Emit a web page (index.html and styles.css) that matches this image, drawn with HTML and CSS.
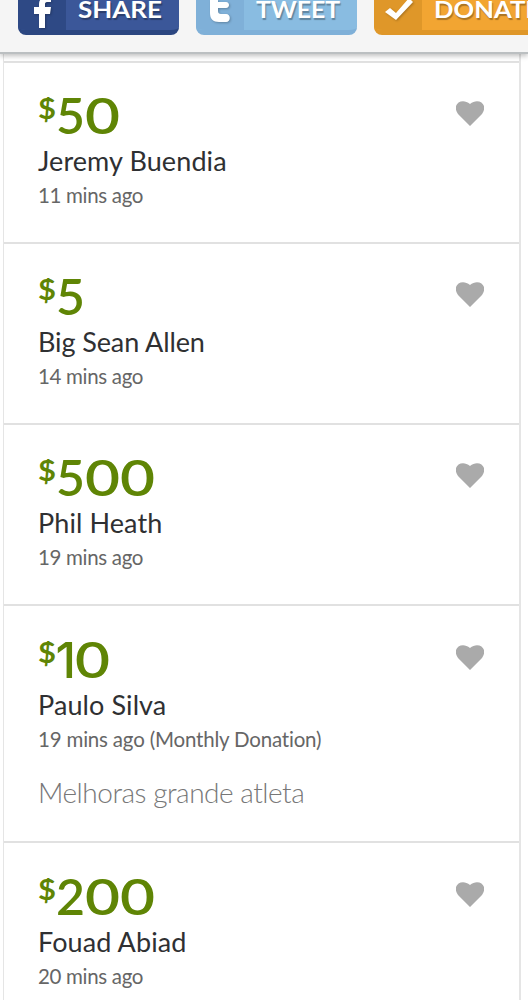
FILE: index.html
```html
<!DOCTYPE html>
<html lang="en">
<head>
<meta charset="utf-8">
<title>Donations</title>
<link rel="stylesheet" href="styles.css">
</head>
<body>
<header class="actions">
  <a class="btn facebook"><span class="btn-icon"><svg width="42" height="28" viewBox="0 0 42 28"><path d="M21 28V14h-5V7h5V4c0-4 2-6 6-6h6v4h-4c-1.500 0-2 1-2 2v3h6l-1 7h-5v14z"/></svg></span><svg class="btn-label" width="113" height="30"><text x="12" y="18" textLength="84" lengthAdjust="spacingAndGlyphs">SHARE</text></svg></a>
  <a class="btn twitter"><span class="btn-icon"><svg width="42" height="28" viewBox="0 0 42 28"><path d="M14-2h8v4h8c4 0 4 6 0 6h-8v3c0 2 1 3 3 3h5c5 0 5 8 0 8h-7c-6 0-9-3-9-9z"/></svg></span><svg class="btn-label" width="113" height="30"><text x="12" y="18" textLength="84" lengthAdjust="spacingAndGlyphs">TWEET</text></svg></a>
  <a class="btn donate"><span class="btn-icon"><svg width="42" height="28" viewBox="0 0 42 28"><path d="M11 12l5-4 6 5L35-2l4 4-17 18z"/></svg></span><svg class="btn-label" width="140" height="30"><text x="12" y="18" textLength="106" lengthAdjust="spacingAndGlyphs">DONATE</text></svg></a>
</header>
<main class="donations">
  <article class="donation">
    <div class="details">
      <svg class="amount" width="130" height="40"><text class="currency" x="0" y="22" textLength="18" lengthAdjust="spacingAndGlyphs">$</text><text x="18" y="37" textLength="29" lengthAdjust="spacingAndGlyphs">5</text><text x="47" y="37" textLength="35" lengthAdjust="spacingAndGlyphs">0</text></svg>
      <h2 class="name">Jeremy Buendia</h2>
      <p class="time">11 mins ago</p>
    </div>
    <svg class="heart" width="28" height="25" viewBox="0 0 28 25"><path d="M14 25L2 13C-5 3 6-4 14 3c8-7 19 0 12 10z"/></svg>
  </article>
  <article class="donation">
    <div class="details">
      <svg class="amount" width="130" height="40"><text class="currency" x="0" y="22" textLength="18" lengthAdjust="spacingAndGlyphs">$</text><text x="18" y="37" textLength="29" lengthAdjust="spacingAndGlyphs">5</text></svg>
      <h2 class="name tight">Big Sean Allen</h2>
      <p class="time">14 mins ago</p>
    </div>
    <svg class="heart" width="28" height="25" viewBox="0 0 28 25"><path d="M14 25L2 13C-5 3 6-4 14 3c8-7 19 0 12 10z"/></svg>
  </article>
  <article class="donation">
    <div class="details">
      <svg class="amount" width="130" height="40"><text class="currency" x="0" y="22" textLength="18" lengthAdjust="spacingAndGlyphs">$</text><text x="18" y="37" textLength="29" lengthAdjust="spacingAndGlyphs">5</text><text x="47" y="37" textLength="70" lengthAdjust="spacingAndGlyphs">00</text></svg>
      <h2 class="name">Phil Heath</h2>
      <p class="time">19 mins ago</p>
    </div>
    <svg class="heart" width="28" height="25" viewBox="0 0 28 25"><path d="M14 25L2 13C-5 3 6-4 14 3c8-7 19 0 12 10z"/></svg>
  </article>
  <article class="donation with-comment">
    <div class="details">
      <svg class="amount" width="130" height="40"><text class="currency" x="0" y="22" textLength="18" lengthAdjust="spacingAndGlyphs">$</text><text class="one" x="17.500" y="37">1</text><text x="37" y="37" textLength="35" lengthAdjust="spacingAndGlyphs">0</text></svg>
      <h2 class="name">Paulo Silva</h2>
      <p class="time">19 mins ago (Monthly Donation)</p>
      <p class="comment">Melhoras grande atleta</p>
    </div>
    <svg class="heart" width="28" height="25" viewBox="0 0 28 25"><path d="M14 25L2 13C-5 3 6-4 14 3c8-7 19 0 12 10z"/></svg>
  </article>
  <article class="donation">
    <div class="details">
      <svg class="amount" width="130" height="40"><text class="currency" x="0" y="22" textLength="18" lengthAdjust="spacingAndGlyphs">$</text><text x="18" y="37" textLength="29" lengthAdjust="spacingAndGlyphs">2</text><text x="47" y="37" textLength="70" lengthAdjust="spacingAndGlyphs">00</text></svg>
      <h2 class="name">Fouad Abiad</h2>
      <p class="time">20 mins ago</p>
    </div>
    <svg class="heart" width="28" height="25" viewBox="0 0 28 25"><path d="M14 25L2 13C-5 3 6-4 14 3c8-7 19 0 12 10z"/></svg>
  </article>
</main>
</body>
</html>
```
FILE: styles.css
```css
* { box-sizing: border-box; }
html { height: 100%; overflow: hidden; }
body {
  margin: 0;
  height: 1000px;
  overflow: hidden;
  background: #fff;
  font-family: Lato, "Open Sans", sans-serif;
  font-variant-ligatures: none;
}
.actions {
  position: relative;
  display: flex;
  gap: 17px;
  height: 54px;
  padding-left: 18px;
  background: #f5f5f5;
  border-bottom: 2px solid #bbbfc1;
  box-shadow: 0 2px 5px rgba(0, 0, 0, .25);
}
.btn {
  display: flex;
  flex: none;
  height: 35px;
  border-radius: 0 0 8px 8px;
  border-bottom: 5px solid;
  overflow: hidden;
}
.btn-icon { width: 48px; height: 30px; flex: none; }
.btn-icon svg { display: block; fill: #fff; filter: drop-shadow(1px 1px 1px rgba(0, 0, 0, .25)); }
.btn-label { display: block; flex: none; height: 30px; }
.btn-label text {
  font-size: 23px;
  font-weight: 700;
  fill: #fff;
  text-shadow: 1px 2px 1px rgba(0, 0, 0, .3);
}
.facebook { width: 161px; background: #3b5799; border-color: #2b4680; }
.facebook .btn-icon { background: #2e4985; }
.twitter { width: 161px; background: #89bce1; border-color: #7fb0d8; }
.twitter .btn-icon { background: #7fb0d8; }
.donate { width: 188px; background: #f2a532; border-color: #df9729; }
.donate .btn-icon { background: #df9729; }
.donations {
  width: 518px;
  margin: 0 0 0 3px;
  padding-top: 6.6px;
  border: solid #e5e5e5;
  border-width: 0 2px 0 1px;
}
.donation {
  display: flex;
  justify-content: space-between;
  height: 181.2px;
  padding: 34.4px 35px 0 34px;
  border-top: 2px solid #e1e1e1;
}
.with-comment { height: 237px; }
.with-comment .time { letter-spacing: -.19px; }
.amount { display: block; fill: #5f8505; font-size: 50px; font-weight: 600; }
.currency { font-size: 29px; font-weight: 700; }
.one { font-family: Inter, sans-serif; font-size: 49.500px; font-weight: 500; }
.name {
  margin: 8px 0 0;
  font-size: 27px;
  line-height: 32px;
  font-weight: 400;
  letter-spacing: .1px;
  color: #2f3032;
}
.tight { letter-spacing: -.1px; }
.time {
  margin: 5px 0 0;
  font-size: 20.5px;
  line-height: 26px;
  letter-spacing: -.32px;
  color: #666;
}
.comment {
  margin: 23px 0 0;
  font-size: 28px;
  line-height: 34px;
  font-weight: 300;
  letter-spacing: -.48px;
  color: #777;
}
.heart { flex: none; margin-top: 4px; fill: #aaa; }
```
